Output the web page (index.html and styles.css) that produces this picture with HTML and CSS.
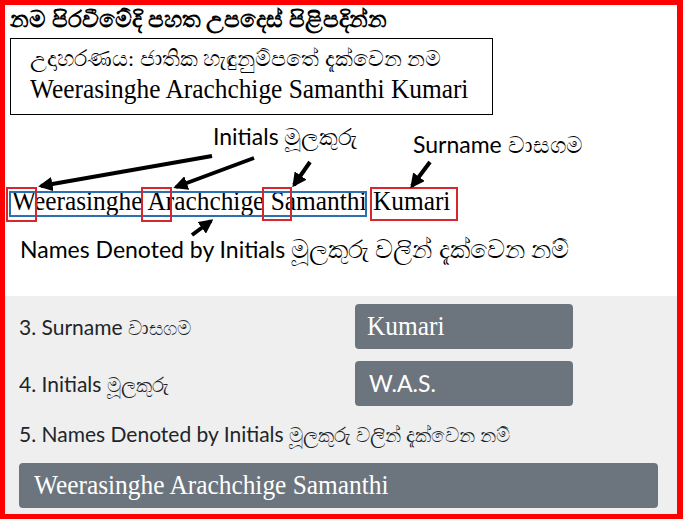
FILE: index.html
```html
<!DOCTYPE html>
<html lang="si">
<head>
<meta charset="UTF-8" />
<meta name="viewport" content="width=device-width, initial-scale=1" />
<title>නම පිරවීම</title>
<link rel="stylesheet" href="styles.css">
</head>
<body>

<div class="frame">
  <section class="notice">
    <h1 class="notice-title">නම පිරවීමේදි පහත උපදෙස් පිළිපදින්න</h1>

    <div class="example">
      <p class="example-caption">උදාහරණය: ජාතික හැඳුනුම්පතේ දැක්වෙන නම</p>
      <p class="example-name narrow">Weerasinghe Arachchige Samanthi Kumari</p>
    </div>

    <!-- name breakdown: which parts are initials and which is the surname -->
    <div class="diagram">
      <span class="tag tag-initials">Initials මූලකුරු</span>
      <span class="tag tag-surname">Surname වාසගම</span>

      <p class="name-line narrow">Weerasinghe Arachchige Samanthi Kumari</p>
      <p class="names-note">Names Denoted by Initials <span class="si">මූලකුරු වලින් දැක්වෙන නම්</span></p>

      <svg class="marks" width="673" height="176" viewBox="0 0 673 176" aria-hidden="true">
        <defs>
          <marker id="head" viewBox="0 0 10 10" refX="8" refY="5" markerWidth="3.6" markerHeight="3.6" orient="auto">
            <path d="M0 0 L10 5 L0 10 Z" fill="#000" />
          </marker>
        </defs>
        <rect class="box-given" x="5" y="72" width="356" height="24" />
        <rect class="box-mark" x="2" y="68" width="29" height="33" />
        <rect class="box-mark" x="137" y="68" width="29" height="33" />
        <rect class="box-mark" x="258" y="68" width="28" height="32" />
        <rect class="box-mark" x="366" y="68" width="86" height="32" />
        <g class="arrows" marker-end="url(#head)">
          <line x1="207" y1="36" x2="36" y2="66" />
          <line x1="249" y1="38" x2="171" y2="67" />
          <line x1="305" y1="42" x2="289" y2="65" />
          <line x1="425" y1="42" x2="407" y2="66" />
          <line x1="187" y1="115" x2="206" y2="101" />
        </g>
      </svg>
    </div>
  </section>

  <form class="name-form">
    <div class="field-row">
      <label class="field-label">3. Surname <span class="si">වාසගම</span></label>
      <div class="field field-serif"><span class="narrow">Kumari</span></div>
    </div>
    <div class="field-row">
      <label class="field-label">4. Initials <span class="si">මූලකුරු</span></label>
      <div class="field">W.A.S.</div>
    </div>
    <label class="field-label wide-label">5. Names Denoted by Initials <span class="si">මූලකුරු වලින් දැක්වෙන නම්</span></label>
    <div class="field field-serif field-wide"><span class="narrow">Weerasinghe Arachchige Samanthi</span></div>
  </form>
</div>

</body>
</html>
```

FILE: styles.css
```css
* {
  box-sizing: border-box;
}

body {
  margin: 0;
  font-family: "Liberation Serif", serif;
  color: #000;
  background: #fff;
}

p {
  margin: 0;
}

/* tall, slightly condensed serif used for the name */
.narrow {
  display: inline-block;
  transform: scaleX(0.94);
  transform-origin: left center;
  white-space: nowrap;
}

/* Red outline round the whole panel */
.frame {
  width: 683px;
  height: 519px;
  border: 5px solid #ff0000;
  border-right-width: 6px;
  display: flex;
  flex-direction: column;
}

/* Top: instructions and example */
.notice {
  background: #fff;
  height: 291px;
  flex-shrink: 0;
}

.notice-title {
  margin: 0;
  padding: 1px 0 0 5px;
  font-size: 23px;
  line-height: 28px;
  font-weight: 700;
}

.example {
  margin: 4px 0 0 5px;
  width: 483px;
  height: 77px;
  border: 1px solid #000;
  padding: 5px 0 0 19px;
}

.example-caption {
  font-size: 22px;
  line-height: 29px;
}

.example-name {
  font-size: 27px;
  line-height: 33px;
}

.diagram {
  position: relative;
  height: 176px;
  margin-top: 5px;
}

.tag {
  position: absolute;
  font-family: Lato, "Liberation Sans", sans-serif;
  font-size: 23px;
  line-height: 28px;
}

.tag-initials {
  left: 208px;
  top: 2px;
}

.tag-surname {
  left: 408px;
  top: 10px;
}

.name-line {
  margin: 65px 0 0 7px;
  font-size: 27px;
  line-height: 33px;
}

.names-note {
  padding: 15px 0 0 15px;
  font-family: Lato, "Liberation Sans", sans-serif;
  font-size: 23px;
  line-height: 30px;
}

.names-note .si {
  font-size: 25px;
}

.marks {
  position: absolute;
  left: 0;
  top: 0;
  pointer-events: none;
}

.box-given {
  fill: none;
  stroke: #2b70b0;
  stroke-width: 2;
}

.box-mark {
  fill: none;
  stroke: #d7262c;
  stroke-width: 2;
}

.arrows line {
  stroke: #000;
  stroke-width: 4;
}

/* Bottom: the filled-in form fields */
.name-form {
  flex: 1;
  background: #efefef;
  padding: 8px 14px 0 14px;
  font-family: Lato, "Liberation Sans", sans-serif;
  color: #212529;
}

.field-row {
  display: grid;
  grid-template-columns: 336px 218px;
  align-items: center;
  margin-bottom: 12px;
}

.field-label {
  font-size: 21px;
}

.field-label .si {
  font-size: 20px;
}

.field {
  height: 45px;
  border-radius: 4px;
  background: #6c757d;
  color: #fff;
  font-size: 23px;
  line-height: 45px;
  padding-left: 14px;
}

.field-serif {
  font-family: "Liberation Serif", serif;
  font-size: 27px;
  padding-left: 12px;
}

.wide-label {
  display: block;
  padding-top: 3px;
}

.field-wide {
  margin-top: 16px;
  width: 639px;
  padding-left: 15px;
}
```
